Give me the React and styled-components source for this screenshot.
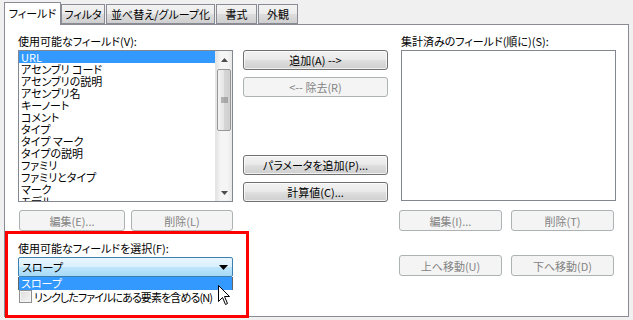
import React from "react";
import styled, { createGlobalStyle } from "styled-components";

const Global = createGlobalStyle`
  html, body { margin: 0; padding: 0; background: #f0f0f0; }
  body {
    font-family: "Noto Sans CJK JP", "Liberation Sans", sans-serif;
    font-size: 11px;
    font-feature-settings: "palt" 1;
    color: #000;
  }
  * { box-sizing: border-box; }
`;

const Window = styled.div`
  position: relative;
  width: 633px;
  height: 320px;
  overflow: hidden;
  background: #f0f0f0;
  padding: 3px 0 0 4px;
`;

const TabBar = styled.div`
  display: flex;
  align-items: flex-end;
  height: 21px;
  position: relative;
  z-index: 2;
`;

const Tab = styled.div`
  width: ${(p) => p.$w}px;
  height: ${(p) => (p.$active ? 23 : 20)}px;
  margin-bottom: ${(p) => (p.$active ? -1 : 0)}px;
  margin-right: ${(p) => (p.$active ? 0 : 1)}px;
  border: 1px solid #898c95;
  border-bottom: ${(p) => (p.$active ? "none" : "1px solid #898c95")};
  background: ${(p) =>
    p.$active ? "#fff" : "linear-gradient(#f3f3f3, #ebebeb 50%, #dddddd 51%, #cfcfcf)"};
  display: flex;
  align-items: center;
  justify-content: center;
  line-height: 12px;
  padding-bottom: ${(p) => (p.$active ? 2 : 0)}px;
  white-space: nowrap;
`;

const Panel = styled.div`
  width: 625px;
  height: 293px;
  border: 1px solid #898c95;
  background: #fff;
  display: flex;
  padding: 9px 0 0 13px;
`;

const Column = styled.div`
  display: flex;
  flex-direction: column;
  width: ${(p) => p.$w}px;
  margin-left: ${(p) => p.$ml || 0}px;
  position: relative;
`;

const Label = styled.div`
  height: 16px;
  line-height: 14px;
  white-space: nowrap;
`;

const ListBox = styled.div`
  height: ${(p) => p.$h}px;
  border: 1px solid #828790;
  background: #fff;
  display: flex;
  overflow: hidden;
`;

const Items = styled.div`
  flex: 1;
  overflow: hidden;
`;

const Item = styled.div`
  height: 12px;
  line-height: 12px;
  padding-left: 2px;
  white-space: nowrap;
  background: ${(p) => (p.$sel ? "#3399ff" : "transparent")};
  color: ${(p) => (p.$sel ? "#fff" : "#000")};
`;

const ScrollBar = styled.div`
  width: 17px;
  display: flex;
  flex-direction: column;
  background: linear-gradient(90deg, #e3e3e3, #f5f5f5 30%, #f5f5f5 70%, #e8e8e8);
  border-left: 1px solid #e4e4e4;
`;

const Arrow = styled.div`
  height: 17px;
  display: flex;
  align-items: center;
  justify-content: center;
`;

const Thumb = styled.div`
  height: 62px;
  margin: 1px 1px 0 1px;
  border: 1px solid #979797;
  border-radius: 2px;
  background: linear-gradient(90deg, #f2f2f2, #e5e5e5 50%, #d6d6d6 51%, #d0d0d0);
  display: flex;
  align-items: center;
  justify-content: center;
`;

const Track = styled.div`
  flex: 1;
`;

const Button = styled.div`
  width: ${(p) => p.$w || 145}px;
  height: ${(p) => p.$h || 20}px;
  margin-top: ${(p) => p.$mt || 0}px;
  border: 1px solid ${(p) => (p.$disabled ? "#adb2b5" : "#707070")};
  border-radius: 3px;
  background: ${(p) =>
    p.$disabled
      ? "#f4f4f4"
      : "linear-gradient(#f2f2f2, #ebebeb 45%, #dddddd 55%, #cfcfcf)"};
  color: ${(p) => (p.$disabled ? "#838383" : "#000")};
  box-shadow: ${(p) => (p.$disabled ? "none" : "inset 0 0 0 1px rgba(255,255,255,0.7)")};
  display: flex;
  align-items: center;
  justify-content: center;
  line-height: 12px;
  white-space: nowrap;
`;

const ButtonRow = styled.div`
  display: flex;
  gap: ${(p) => p.$gap}px;
  margin-top: ${(p) => p.$mt}px;
  margin-left: ${(p) => p.$ml || 0}px;
`;

const Section = styled.div`
  display: flex;
  flex-direction: column;
  margin-top: 10px;
  position: relative;
`;

const Combo = styled.div`
  height: 20px;
  width: 215px;
  border: 1px solid #3c7fb1;
  border-radius: 2px;
  background: linear-gradient(#eaf6fd, #d9f0fc 50%, #bee6fd 51%, #a7d9f5);
  display: flex;
  align-items: center;
  justify-content: space-between;
  padding: 0 4px 0 3px;
  line-height: 12px;
`;

const DropList = styled.div`
  position: absolute;
  left: 0;
  top: 36px;
  width: 215px;
  height: 13px;
  border-left: 1px solid #646464;
  border-right: 1px solid #646464;
  background: #3399ff;
  color: #fff;
  line-height: 13px;
  padding-left: 2px;
  z-index: 3;
`;

const CheckRow = styled.div`
  display: flex;
  align-items: center;
  gap: 2px;
  margin-top: 13px;
  margin-left: 1px;
  height: 13px;
  line-height: 12px;
  white-space: nowrap;
  letter-spacing: -0.9px;
`;

const CheckBox = styled.div`
  width: 13px;
  height: 13px;
  flex: none;
  border: 1px solid #8f8f8f;
  background: linear-gradient(135deg, #dcdcdc, #f6f6f6);
  box-shadow: inset 0 0 0 1px #f4f4f4;
`;

const RedFrame = styled.div`
  position: absolute;
  left: 5px;
  top: 231px;
  width: 244px;
  height: 87px;
  border: 3px solid #ff0000;
  pointer-events: none;
  z-index: 5;
`;

const Cursor = styled.svg`
  position: absolute;
  left: 218px;
  top: 285px;
  z-index: 6;
`;

const fields = [
  "URL",
  "アセンブリ コード",
  "アセンブリの説明",
  "アセンブリ名",
  "キーノート",
  "コメント",
  "タイプ",
  "タイプ マーク",
  "タイプの説明",
  "ファミリ",
  "ファミリとタイプ",
  "マーク",
  "モデル",
];

const tabs = [
  { t: "フィールド", w: 57, a: true },
  { t: "フィルタ", w: 44 },
  { t: "並べ替え/グループ化", w: 109 },
  { t: "書式", w: 41 },
  { t: "外観", w: 40 },
];

export default function App() {
  return (
    <Window>
      <Global />
      <TabBar>
        {tabs.map((t) => (
          <Tab key={t.t} $w={t.w} $active={t.a}>
            {t.t}
          </Tab>
        ))}
      </TabBar>
      <Panel>
        <Column $w={215}>
          <Label>使用可能なフィールド(V):</Label>
          <ListBox $h={152}>
            <Items>
              {fields.map((f, i) => (
                <Item key={f} $sel={i === 0}>
                  {f}
                </Item>
              ))}
            </Items>
            <ScrollBar>
              <Arrow>
                <svg width="7" height="4" viewBox="0 0 7 4">
                  <path d="M0 4 L3.5 0 L7 4 Z" fill="#4d4d4d" />
                </svg>
              </Arrow>
              <Thumb>
                <svg width="7" height="7" viewBox="0 0 7 7">
                  <path d="M0 1h7M0 3h7M0 5h7" stroke="#7a7a7a" strokeWidth="1" />
                </svg>
              </Thumb>
              <Track />
              <Arrow>
                <svg width="7" height="4" viewBox="0 0 7 4">
                  <path d="M0 0 L7 0 L3.5 4 Z" fill="#4d4d4d" />
                </svg>
              </Arrow>
            </ScrollBar>
          </ListBox>
          <ButtonRow $gap={6} $mt={8} $ml={1}>
            <Button $w={106} $h={21} $disabled>
              編集(E)...
            </Button>
            <Button $w={102} $h={21} $disabled>
              削除(L)
            </Button>
          </ButtonRow>
          <Section>
            <Label>使用可能なフィールドを選択(F):</Label>
            <Combo>
              <span>スロープ</span>
              <svg width="9" height="5" viewBox="0 0 9 5">
                <path d="M0 0 L9 0 L4.5 5 Z" fill="#000" />
              </svg>
            </Combo>
            <DropList>スロープ</DropList>
            <CheckRow>
              <CheckBox />
              <span>リンクしたファイルにある要素を含める(N)</span>
            </CheckRow>
          </Section>
        </Column>
        <Column $w={145} $ml={10}>
          <Button $mt={16}>追加(A) --&gt;</Button>
          <Button $mt={7} $disabled>
            &lt;-- 除去(R)
          </Button>
          <Button $mt={58}>パラメータを追加(P)...</Button>
          <Button $mt={7}>計算値(C)...</Button>
        </Column>
        <Column $w={215} $ml={13}>
          <Label>集計済みのフィールド(順に)(S):</Label>
          <ListBox $h={151} />
          <ButtonRow $gap={9} $mt={9} $ml={-2}>
            <Button $w={103} $h={21} $disabled>
              編集(I)...
            </Button>
            <Button $w={103} $h={21} $disabled>
              削除(T)
            </Button>
          </ButtonRow>
          <ButtonRow $gap={9} $mt={24} $ml={-2}>
            <Button $w={103} $h={21} $disabled>
              上へ移動(U)
            </Button>
            <Button $w={103} $h={21} $disabled>
              下へ移動(D)
            </Button>
          </ButtonRow>
        </Column>
      </Panel>
      <RedFrame />
      <Cursor width="13" height="21" viewBox="0 0 13 21">
        <path
          d="M0.5 0.5 L0.5 16.5 L4.5 12.5 L7.5 19.5 L9.5 18.5 L6.5 11.5 L11.5 11.5 Z"
          fill="#fff"
          stroke="#000"
          strokeWidth="1"
          strokeLinejoin="miter"
        />
      </Cursor>
    </Window>
  );
}
